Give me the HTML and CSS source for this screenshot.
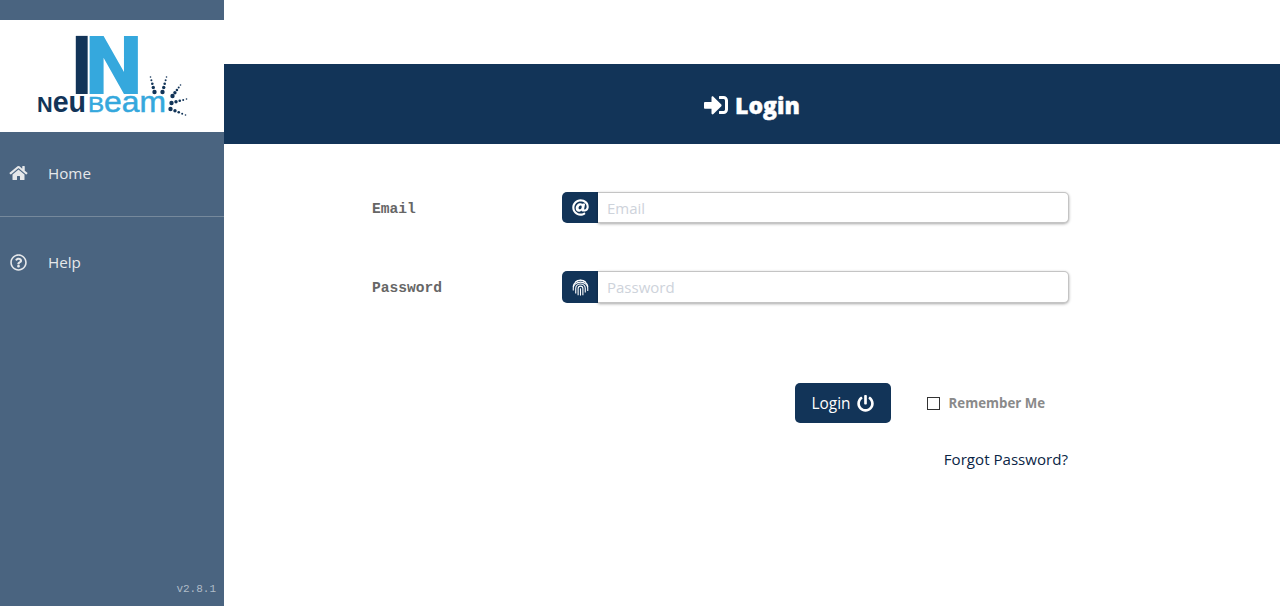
FILE: index.html
```html
<!DOCTYPE html>
<html lang="en">
<head>
  <meta charset="UTF-8" />
  <meta name="viewport" content="width=device-width,initial-scale=1.0" />
  <title>NeuBeam Login</title>
  <link rel="stylesheet" href="styles.css">
</head>
<body>
  <div class="layout">
    <aside class="sidebar">
      <div class="logo-box">
        <svg class="logo" viewBox="0 0 152 80" width="152" height="80">
          <text class="logo-big logo-i" x="34.200" y="58" textLength="21" lengthAdjust="spacingAndGlyphs">I</text>
          <text class="logo-big logo-n" x="48.200" y="58" textLength="57" lengthAdjust="spacingAndGlyphs">N</text>
          <text class="logo-neu" x="0" y="76" textLength="49" lengthAdjust="spacingAndGlyphs"><tspan class="logo-cap">N</tspan>eu</text>
          <text class="logo-beam" x="51" y="76" textLength="78" lengthAdjust="spacingAndGlyphs"><tspan class="logo-cap">B</tspan>eam</text>
          <g class="logo-dots">
            <circle cx="117.500" cy="56" r="2.200"/><circle cx="116.300" cy="51.500" r="1.700"/><circle cx="115.300" cy="47.750" r="1.300"/><circle cx="114.400" cy="44.300" r="1"/><circle cx="113.500" cy="41" r=".8"/>
            <circle cx="125.500" cy="56" r="2.200"/><circle cx="126.700" cy="51.500" r="1.700"/><circle cx="127.700" cy="47.750" r="1.300"/><circle cx="128.600" cy="44.300" r="1"/><circle cx="129.500" cy="41" r=".8"/>
            <circle cx="135.500" cy="60" r="2.200"/><circle cx="137.900" cy="56.700" r="1.700"/><circle cx="139.900" cy="54" r="1.300"/><circle cx="141.700" cy="51.400" r="1"/><circle cx="143.500" cy="49" r=".8"/>
            <circle cx="134.500" cy="67" r="2.200"/><circle cx="139" cy="65.800" r="1.700"/><circle cx="142.750" cy="64.800" r="1.300"/><circle cx="146.200" cy="63.900" r="1"/><circle cx="149.500" cy="63" r=".8"/>
            <circle cx="133.500" cy="73" r="2.200"/><circle cx="138" cy="74.800" r="1.700"/><circle cx="141.750" cy="76.300" r="1.300"/><circle cx="145.200" cy="77.700" r="1"/><circle cx="148.500" cy="79" r=".8"/>
          </g>
        </svg>
      </div>
      <nav class="nav">
        <a class="nav-item nav-home">
          <svg class="nav-icon" viewBox="0 0 576 512"><path d="M280.37 148.26L96 300.11V464a16 16 0 0 0 16 16l112.06-.29a16 16 0 0 0 15.92-16V368a16 16 0 0 1 16-16h64a16 16 0 0 1 16 16v95.64a16 16 0 0 0 16 16.05L464 480a16 16 0 0 0 16-16V300L295.67 148.26a12.19 12.19 0 0 0-15.3 0zM571.6 251.47L488 182.56V44.05a12 12 0 0 0-12-12h-56a12 12 0 0 0-12 12v72.61L318.47 43a48 48 0 0 0-61 0L4.34 251.47a12 12 0 0 0-1.6 16.9l25.5 31A12 12 0 0 0 45.15 301l235.22-193.74a12.19 12.19 0 0 1 15.3 0L530.9 301a12 12 0 0 0 16.9-1.6l25.5-31a12 12 0 0 0-1.7-16.93z"/></svg>
          <span>Home</span>
        </a>
        <a class="nav-item nav-help">
          <svg class="nav-icon help-icon" viewBox="0 0 512 512"><path d="M256 8C119.043 8 8 119.083 8 256c0 136.997 111.043 248 248 248s248-111.003 248-248C504 119.083 392.957 8 256 8zm0 448c-110.532 0-200-89.394-200-200 0-110.495 89.472-200 200-200 110.491 0 200 89.471 200 200 0 110.569-89.427 200-200 200zm107.244-255.2c0 67.052-72.421 68.084-72.421 92.863V300c0 6.627-5.373 12-12 12h-45.647c-6.627 0-12-5.373-12-12v-8.659c0-35.745 27.1-50.034 47.579-61.516 17.561-9.845 28.324-16.541 28.324-29.579 0-17.246-21.999-28.693-39.784-28.693-23.189 0-33.894 10.977-48.942 29.969-4.057 5.12-11.46 6.071-16.666 2.124l-27.824-21.098c-5.107-3.872-6.251-11.066-2.644-16.363C184.846 131.491 214.94 112 261.794 112c49.071 0 101.45 38.304 101.45 88.8zM298 368c0 23.159-18.841 42-42 42s-42-18.841-42-42 18.841-42 42-42 42 18.841 42 42z"/></svg>
          <span>Help</span>
        </a>
      </nav>
      <div class="version">v2.8.1</div>
    </aside>
    <main class="main">
      <header class="page-header">
        <svg class="header-icon" viewBox="0 0 512 512"><path d="M416 448h-84c-6.600 0-12-5.400-12-12v-40c0-6.600 5.400-12 12-12h84c17.700 0 32-14.300 32-32V160c0-17.700-14.300-32-32-32h-84c-6.600 0-12-5.400-12-12V76c0-6.600 5.400-12 12-12h84c53 0 96 43 96 96v192c0 53-43 96-96 96zm-47-201L201 79c-15-15-41-4.500-41 17v96H24c-13.300 0-24 10.700-24 24v96c0 13.300 10.700 24 24 24h136v96c0 21.500 26 32 41 17l168-168c9.300-9.400 9.300-24.600 0-34z"/></svg>
        <h1>Login</h1>
      </header>
      <form class="login-form">
        <div class="form-row">
          <label class="form-label" for="email">Email</label>
          <div class="input-group">
            <span class="input-addon">
              <svg class="addon-icon" viewBox="0 0 512 512"><path d="M256 8C118.941 8 8 118.919 8 256c0 137.059 110.919 248 248 248 48.154 0 95.342-14.140 135.408-40.223 12.005-7.815 14.625-24.288 5.552-35.372l-10.177-12.433c-7.671-9.371-21.179-11.667-31.373-5.129C325.920 429.757 291.314 440 256 440c-101.458 0-184-82.542-184-184S154.542 72 256 72c100.139 0 184 57.619 184 160 0 38.786-21.093 79.742-58.170 83.693-17.349-.454-16.910-12.857-13.476-30.024l23.433-121.110C394.653 149.750 383.308 136 368.225 136h-44.981a13.518 13.518 0 0 0-13.432 11.993l-.010.092c-14.697-17.901-40.448-21.775-59.971-21.775-74.580 0-137.831 62.234-137.831 151.460 0 65.303 36.785 105.870 96 105.870 26.984 0 57.369-15.637 74.991-38.333 9.522 34.104 40.613 34.103 70.710 34.103C462.609 379.410 504 307.798 504 232 504 95.653 394.023 8 256 8zm-21.680 304.430c-22.249 0-36.070-15.623-36.070-40.771 0-44.993 30.779-72.729 58.630-72.729 22.292 0 35.601 15.241 35.601 40.770 0 45.061-33.875 72.730-58.161 72.730z"/></svg>
            </span>
            <input class="text-input" id="email" type="text" placeholder="Email">
          </div>
        </div>
        <div class="form-row form-row-pass">
          <label class="form-label" for="password">Password</label>
          <div class="input-group">
            <span class="input-addon">
              <svg class="addon-icon print" viewBox="0 0 20 20">
                <path d="M4 3.500A9 9 0 0 1 16 3.500"/>
                <path d="M1.300 9A8.800 8.800 0 0 1 18.700 9"/>
                <path d="M1.500 13.500V10.500a8.500 6.800 0 0 1 17 0V14"/>
                <path d="M4.400 17V11a5.600 5.200 0 0 1 11.200 0V16"/>
                <path d="M7.200 19V11.200a2.800 2.800 0 0 1 5.600 0V19"/>
                <path d="M10 19.500V11"/>
              </svg>
            </span>
            <input class="text-input" id="password" type="password" placeholder="Password">
          </div>
        </div>
        <div class="actions">
          <button class="login-btn" type="button">
            Login
            <svg class="btn-icon" viewBox="0 0 512 512"><path d="M400 54.100c63 45 104 118.600 104 201.900 0 136.800-110.800 247.700-247.500 248C120 504.300 8.200 393 8 256.400 7.900 173.100 48.900 99.300 111.800 54.200c11.700-8.300 28-4.800 35 7.700L162.600 90c5.900 10.500 3.100 23.800-6.600 31-41.500 30.800-68 79.600-68 134.900-.100 92.300 74.500 168.100 168 168.100 91.600 0 168.600-74.200 168-169.100-.3-51.800-24.700-101.800-68.100-134-9.700-7.200-12.400-20.500-6.400-30.900l15.800-28.100c7-12.400 23.200-16.100 34.800-7.900zM296 264V24c0-13.300-10.700-24-24-24h-32c-13.300 0-24 10.700-24 24v240c0 13.300 10.700 24 24 24h32c13.300 0 24-10.700 24-24z"/></svg>
          </button>
          <label class="remember">
            <span class="check-box"></span>
            <span>Remember Me</span>
          </label>
        </div>
        <div class="forgot-row"><a class="forgot">Forgot Password?</a></div>
      </form>
    </main>
  </div>
</body>
</html>
```

FILE: styles.css
```css
body {
  margin: 0;
  font-family: 'Open Sans', 'Noto Sans', Arial, sans-serif;
  background: #fff;
  color: #123458;
}
.layout {
  display: flex;
  height: 606px;
  overflow: hidden;
}
.sidebar {
  width: 224px;
  flex: none;
  display: flex;
  flex-direction: column;
  padding-top: 20px;
  box-sizing: border-box;
  background: #4a6480;
  color: #e6e8ea;
}
.logo-box {
  height: 112px;
  background: #fff;
  display: flex;
  justify-content: center;
  align-items: flex-start;
  padding: 16px 0 0 0;
  box-sizing: border-box;
}
.logo {
  display: block;
  margin-left: 1px;
  overflow: visible;
}
.logo-big {
  font: 900 81.500px Roboto, Arial, sans-serif;
}
.logo-i { fill: #123458; }
.logo-n { fill: #35a8dd; }
.logo-neu {
  font: 700 29px 'Liberation Sans', Arial, sans-serif;
  fill: #123458;
}
.logo-beam {
  font: 400 29px 'Liberation Sans', Arial, sans-serif;
  fill: #35a8dd;
  stroke: #35a8dd;
  stroke-width: .5;
}
.logo-cap { font-size: 22px; }
.logo-dots { fill: #123458; }
.nav {
  flex: 1;
  display: flex;
  flex-direction: column;
}
.nav-item {
  display: flex;
  align-items: center;
  gap: 20px;
  padding-left: 9px;
  font-size: 15.200px;
  line-height: 20px;
}
.nav-home {
  height: 85px;
  padding-bottom: 3px;
  box-sizing: border-box;
  border-bottom: 1px solid #76899c;
}
.nav-help {
  margin-top: 35px;
  height: 20px;
}
.nav-icon {
  width: 19px;
  height: 16px;
  fill: #e6e8ea;
}
.help-icon {
  height: 17px;
}
.version {
  padding: 0 8px 10px 0;
  text-align: right;
  font: 11px/13px 'Liberation Mono', monospace;
  color: #b0bcc8;
}
.main {
  flex: 1;
  padding-top: 64px;
}
.page-header {
  height: 80px;
  background: #123458;
  color: #fff;
  display: flex;
  align-items: center;
  justify-content: center;
  gap: 7px;
}
.page-header h1 {
  margin: 0;
  padding-top: 2px;
  font: 800 23px/30px 'Open Sans', Arial, sans-serif;
  -webkit-text-stroke: .4px #fff;
}
.header-icon {
  width: 24px;
  height: 24px;
  margin-top: 1px;
  fill: #fff;
}
.login-form {
  width: 697px;
  margin-left: 148px;
  padding-top: 48px;
}
.form-row {
  display: flex;
  align-items: center;
  height: 31px;
}
.form-row-pass {
  height: 32px;
  margin-top: 48px;
}
.form-label {
  width: 190px;
  flex: none;
  padding-top: 2px;
  font: 700 14.600px 'Liberation Mono', monospace;
  color: #666;
}
.input-group {
  flex: 1;
  display: flex;
  height: 100%;
}
.input-addon {
  width: 36px;
  flex: none;
  background: #123458;
  border-radius: 5px 0 0 5px;
  display: flex;
  align-items: center;
  justify-content: center;
}
.addon-icon {
  width: 17px;
  height: 17px;
  fill: #fff;
}
.print {
  fill: none;
  stroke: #fff;
  stroke-width: 1.300;
}
.text-input {
  flex: 1;
  min-width: 0;
  padding: 0 9px;
  border: 1px solid #c4c4c4;
  border-left: none;
  border-radius: 0 5px 5px 0;
  box-shadow: 0 1px 3px rgba(0,0,0,0.35);
  font: 15px 'Open Sans', Arial, sans-serif;
  outline: none;
}
.text-input::placeholder { color: #ced3db; }
.actions {
  display: flex;
  align-items: center;
  justify-content: flex-end;
  gap: 36px;
  margin-top: 80px;
  padding-right: 24px;
}
.login-btn {
  width: 96px;
  height: 40px;
  display: flex;
  align-items: center;
  justify-content: center;
  gap: 6px;
  padding: 0;
  border: none;
  border-radius: 5px;
  background: #123458;
  color: #fff;
  font: 15.400px 'Open Sans', Arial, sans-serif;
}
.btn-icon {
  width: 17px;
  height: 17px;
  fill: #fff;
}
.remember {
  display: flex;
  align-items: center;
  gap: 9px;
  font: 700 13.250px 'Open Sans', Arial, sans-serif;
  color: #8a8a8a;
}
.check-box {
  width: 11px;
  height: 11px;
  border: 1px solid #333;
  background: #fff;
}
.forgot-row {
  display: flex;
  justify-content: flex-end;
  margin-top: 26px;
  padding-right: 1px;
}
.forgot {
  font-size: 15.100px;
  line-height: 20px;
  color: #0b2545;
}
```
